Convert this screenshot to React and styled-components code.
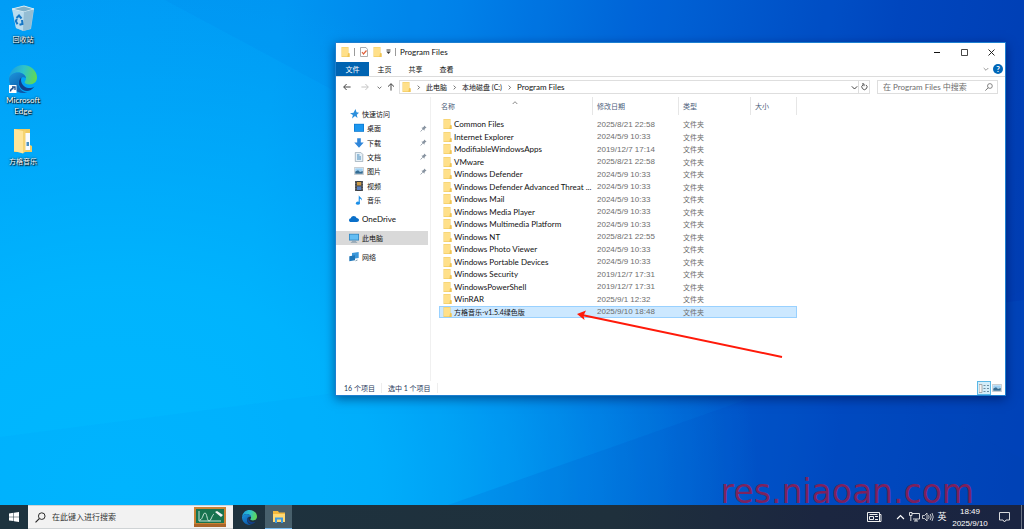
import React from "react";
import styled, { createGlobalStyle, css } from "styled-components";

const Global = createGlobalStyle`
  * { box-sizing: border-box; }
  body { margin: 0; font: 8px/12px Lato, "Noto Sans CJK SC", sans-serif; color: #111; }
  button, input { font: inherit; color: inherit; border: 0; padding: 0; margin: 0; background: none; }
  a { color: inherit; text-decoration: none; }
  ul, ol { list-style: none; margin: 0; padding: 0; }
  svg { display: block; flex: none; }
`;

const numerals = css`
  padding-top: 1px;
  font-family: "Liberation Sans", "Noto Sans CJK SC", sans-serif;
`;

const Desktop = styled.div`
  position: relative;
  display: flex;
  flex-direction: column;
  min-height: 100vh;
  overflow: hidden;
  background:
    radial-gradient(ellipse 62% 95% at 12% 92%, rgba(0, 184, 255, 1) 0%, rgba(0, 184, 255, 0.85) 40%, rgba(0, 176, 255, 0) 100%),
    linear-gradient(98deg, #009cf6 0%, #009af4 26%, #0084ea 42%, #0066d8 58%, #0046bd 82%, #003cb0 100%);
`;

const Beams = styled.svg`
  position: absolute;
  inset: 0;
  width: 100%;
  height: 100%;
`;

const Shortcuts = styled.nav`
  position: relative;
  flex: 1;
  display: flex;
  flex-direction: column;
  align-items: flex-start;
  padding-top: 4px;
`;

const Shortcut = styled.a`
  display: flex;
  flex-direction: column;
  align-items: center;
  gap: 2px;
  width: 46px;
  height: 61px;
  color: #fff;
  line-height: 11px;
  font-size: ${(p) => (p.$latin ? 8 : 7)}px;
  text-align: center;
  text-shadow: 0 0 2px #000, 1px 1px 1px #000;
`;

const Window = styled.main`
  position: absolute;
  top: 42px;
  left: 335px;
  right: 18px;
  display: flex;
  flex-direction: column;
  background: #fff;
  border: 1px solid #1d7fd0;
  box-shadow: 0 3px 10px rgba(0, 10, 60, 0.5);
`;

const TitleBar = styled.header`
  display: flex;
  align-items: center;
  gap: 4px;
  height: 18px;
  padding-left: 5px;
`;

const Divider = styled.span`
  width: 1px;
  height: 8px;
  background: #9a9a9a;
`;

const Title = styled.h1`
  flex: 1;
  margin: 0;
  font-size: 8px;
  font-weight: 400;
`;

const WindowControls = styled.div`
  display: flex;
`;

const WindowButton = styled.button`
  display: flex;
  align-items: center;
  justify-content: center;
  width: 27px;
  height: 18px;
`;

const Ribbon = styled.nav`
  display: flex;
  align-items: center;
  height: 16px;
  padding-right: 2px;
  border-bottom: 1px solid #dcdcdc;
`;

const Tab = styled.button`
  width: ${(p) => (p.$active ? 33 : 31)}px;
  height: 14px;
  font-size: 7px;
  ${(p) => p.$active && css`background: #0063b1; color: #fff;`}
`;

const Spacer = styled.span`
  flex: 1;
`;

const HelpButton = styled.button`
  width: 10px;
  height: 10px;
  margin-left: 4px;
  border-radius: 50%;
  background: #0067b8;
  color: #fff;
  font-weight: 700;
  line-height: 10px;
`;

const AddressRow = styled.div`
  display: flex;
  align-items: center;
  gap: 4px;
  height: 20px;
  padding: 0 7px 0 4px;
`;

const NavButton = styled.button`
  display: flex;
  align-items: center;
  justify-content: center;
  width: ${(p) => p.$width || 8}px;
  height: 12px;
`;

const AddressBox = styled.div`
  flex: 1;
  display: flex;
  align-items: center;
  height: 14px;
  padding-left: 2px;
  border: 1px solid #dedede;
`;

const Crumbs = styled.ol`
  flex: 1;
  display: flex;
  align-items: center;
`;

const Crumb = styled.li`
  display: flex;
  align-items: center;
  gap: 5px;
  padding-left: 5px;
  font-size: ${(p) => (p.$cjk ? 7 : 8)}px;
`;

const RefreshButton = styled.button`
  display: flex;
  align-items: center;
  justify-content: center;
  width: 11px;
  height: 12px;
  border-left: 1px solid #dedede;
`;

const SearchBox = styled.label`
  display: flex;
  align-items: center;
  width: 121px;
  height: 14px;
  margin-left: 3px;
  padding: 0 4px 0 5px;
  border: 1px solid #dedede;
`;

const SearchInput = styled.input`
  flex: 1;
  min-width: 0;
  font-size: 8px;
  outline: 0;
  &::placeholder { color: ${(p) => p.$tone || "#6d6d6d"}; opacity: 1; }
`;

const Content = styled.div`
  display: flex;
  min-height: 284px;
`;

const Sidebar = styled.nav`
  display: flex;
  flex-direction: column;
  gap: 5px;
  width: 95px;
  padding: 10px 2px 0 0;
  border-right: 1px solid #f0f0f0;
`;

const QuickGroup = styled.ul`
  display: flex;
  flex-direction: column;
  height: 100px;
`;

const QuickEntry = styled.li`
  flex: 1;
  display: flex;
`;

const Place = styled.a`
  flex: 1;
  display: flex;
  align-items: center;
  gap: 3px;
  min-height: 14px;
  padding: 0 1px 0 ${(p) => (p.$nested ? 18 : 13)}px;
  font-size: ${(p) => (p.$latin ? 8 : 7)}px;
  line-height: 14px;
  background: ${(p) => (p.$selected ? "#d9d9d9" : "transparent")};
`;

const TopPlace = styled.div`
  display: flex;
`;

const PlaceName = styled.span`
  flex: 1;
`;

const FileArea = styled.section`
  flex: 1;
  padding-left: 8px;
`;

const FileTable = styled.table`
  width: 358px;
  height: 221px;
  table-layout: fixed;
  border-collapse: separate;
  border-spacing: 0;
`;

const HeadCell = styled.th`
  height: 18px;
  padding: 0 0 0 ${(p) => (p.$first ? 2 : 4)}px;
  border-right: 1px solid #e6e6e6;
  color: #4c607a;
  font-size: 7px;
  font-weight: 400;
  text-align: left;
`;

const SortMark = styled.span`
  float: right;
  width: 80px;
  height: 12px;
`;

const GapRow = styled.tr`
  height: 3px;
`;

const Cell = styled.td`
  padding: 0 0 0 4px;
  color: #6d6d6d;
  font-size: ${(p) => (p.$cjk ? 7 : 8)}px;
  line-height: 10px;
  white-space: nowrap;
  ${(p) => p.$numeric && numerals}
`;

const FileRow = styled.tr`
  ${(p) => p.$selected && css`
    background: #cce8ff;
    outline: 1px solid #99d1ff;
    outline-offset: -1px;
  `}
`;

const FileName = styled.div`
  display: flex;
  align-items: center;
  gap: 2px;
  color: #111;
`;

const StatusBar = styled.footer`
  display: flex;
  align-items: center;
  gap: 6px;
  height: 14px;
  padding: 0 2px 0 8px;
  color: #1e395b;
  font-size: 7px;
`;

const StatusText = styled.span`
  padding-right: 6px;
  border-right: 1px solid #eeeeee;
  line-height: 10px;
`;

const ViewButton = styled.button`
  display: flex;
  align-items: center;
  justify-content: center;
  width: ${(p) => (p.$active ? 14 : 12)}px;
  height: 14px;
  ${(p) => p.$active && css`background: #d3edf9; border: 1px solid #5bb8e6;`}
`;

const ViewButtons = styled.div`
  display: flex;
`;

const Pointer = styled.svg`
  position: absolute;
  top: 267px;
  left: 240px;
`;

const Watermark = styled.p`
  position: absolute;
  right: 50px;
  bottom: 19px;
  margin: 0;
  color: rgba(160, 22, 66, 0.78);
  font: 33px/36px "DejaVu Sans", sans-serif;
`;

const Taskbar = styled.footer`
  position: relative;
  display: flex;
  align-items: stretch;
  height: 24px;
  background: linear-gradient(90deg, #1d333f, #1f303c 60%, #1b2640 80%, #1a2441);
  color: #fff;
`;

const TaskButton = styled.button`
  display: flex;
  align-items: center;
  justify-content: center;
  width: ${(p) => p.$width}px;
  ${(p) => p.$active && css`background: #48606c; border-bottom: 1px solid #76b9ed;`}
`;

const TaskSearch = styled.label`
  display: flex;
  align-items: center;
  gap: 6px;
  width: 205px;
  padding: 0 7px;
  background: #f2f2f2;
  border: 1px solid #cfd3d5;
  border-width: 1px 0;
  color: #333;
`;

const Tray = styled.div`
  display: flex;
  align-items: center;
`;

const TrayButton = styled.button`
  display: flex;
  align-items: center;
  justify-content: center;
  width: ${(p) => p.$width || 14}px;
  height: 24px;
  font-size: 9px;
`;

const Clock = styled.time`
  width: 42px;
  line-height: 12px;
  text-align: center;
  ${numerals}
`;

const PeekEdge = styled.span`
  width: 3px;
  height: 24px;
  border-left: 1px solid #6b7484;
`;

const Folder = () => (
  <svg width="9" height="10" viewBox="0 0 9 10" aria-hidden="true">
    <path d="M.5 0H7.500v6l1 .5v3.500H.5z" fill="#f2cc62" />
    <path d="M1 .5h6v8.800H1z" fill="#ffe08a" />
    <path d="M7 6.300h1.500V10H6.300z" fill="#f0c454" />
  </svg>
);

const Chevron = ({ dir = "right", size = 5, color = "#555" }) => {
  const turn = { right: 0, down: 90, up: -90 }[dir];
  return (
    <svg width={size} height={size} viewBox="0 0 6 6" aria-hidden="true">
      <path d="M2 .7 4.300 3 2 5.300" transform={`rotate(${turn} 3 3)`} fill="none" stroke={color} strokeWidth={size > 6 ? 0.8 : 1} />
    </svg>
  );
};

const Arrow = ({ angle = 0, color = "#444" }) => (
  <svg width="8" height="8" viewBox="0 0 8 8" aria-hidden="true">
    <path d="M7.600 4H.8M3.600 1 .7 4l2.900 3" transform={`rotate(${angle} 4 4)`} fill="none" stroke={color} strokeWidth="1" />
  </svg>
);

const Lens = ({ size = 8, color = "#555" }) => (
  <svg width={size} height={size} viewBox="0 0 8 8" aria-hidden="true">
    <circle cx="4.900" cy="3" r="2.400" fill="none" stroke={color} strokeWidth=".7" />
    <path d="M3.100 4.800.4 7.600" stroke={color} strokeWidth=".8" />
  </svg>
);

const EdgeLogo = ({ size, id }) => (
  <svg width={size} height={size} viewBox="0 0 28 28" aria-hidden="true">
    <defs>
      <linearGradient id={`${id}a`} x1="0" y1=".3" x2="1" y2=".5">
        <stop offset="0" stopColor="#1c9ee0" />
        <stop offset=".5" stopColor="#2fc3c9" />
        <stop offset="1" stopColor="#62d952" />
      </linearGradient>
      <linearGradient id={`${id}b`} x1="0" y1="0" x2=".6" y2="1">
        <stop offset="0" stopColor="#1d96dc" />
        <stop offset="1" stopColor="#0b57a8" />
      </linearGradient>
    </defs>
    <path d="M0 13C1 5 7 0 14 0c8 0 14 6 14 12.500 0 4-3 7-7.500 7-3 0-5-1-5-2.200 0-.8 1.500-1.600 1.500-4C17 10 13 7.500 9 7.500 5 7.500 1.500 10 0 13z" fill={`url(#${id}a)`} />
    <path d="M0 13c2-4 5-5.500 9-5.500 4.500 0 7.500 2.500 8 5.500-4-2-7.500 1-7.500 5.500 0 5 4 9 9 9C9 30-.5 23 0 13z" fill={`url(#${id}b)`} />
    <path d="M12.500 12.500c-3 2-3.500 6-1.500 9.500 3 5 10 6 14.500-.5-3 2-7 2-10 0-3-2.200-4.200-5.800-3-9z" fill="#11408c" />
  </svg>
);

const RecycleBin = () => (
  <svg width="24" height="28" viewBox="0 0 24 28" aria-hidden="true">
    <path d="M1 5 13 2l10 3-3 20-8 2-7-3z" fill="#a9cfe3" />
    <path d="M1 5l12-3 10 3-10 3z" fill="#7fb0c8" stroke="#dceef5" strokeWidth="1" />
    <path d="m1.500 6 11.500 2-1 18.500L5 24z" fill="#b9dcee" />
    <path d="m13 8 9.500-2.500L19.500 25l-7.500 2z" fill="#94bdd3" />
    <path d="M5.500 14 8 11.500l2.500 3M11 16l.5 4-3 .8M6.500 20.300 4.800 17l1.200-2" fill="none" stroke="#1476c6" strokeWidth="2" />
  </svg>
);

const EdgeShortcutArt = () => (
  <svg width="30" height="28" viewBox="0 0 30 28" aria-hidden="true">
    <g transform="translate(1 0)"><EdgeLogo size={28} id="desk" /></g>
    <path d="M1 20h7.500v8H1z" fill="#fff" />
    <path d="M2.500 26.500c0-2 1-3 3-3M4 22h3v3" fill="none" stroke="#174a8c" strokeWidth="1.300" />
  </svg>
);

const MusicFolderArt = () => (
  <svg width="20" height="28" viewBox="0 0 20 28" aria-hidden="true">
    <path d="M1 3h16v16l2 1v6H1z" fill="#f0cb62" />
    <path d="M12 7h5v17h-5z" fill="#f8fbff" />
    <path d="M13.500 16h2.500v4h-2.500z" fill="#4b8fc0" />
    <path d="M1 3l9 2v22.500L1 25z" fill="#ffe599" />
    <path d="M10 5l2.500-1v21.500L10 27.500z" fill="#f5d472" />
  </svg>
);

const Pin = () => (
  <svg width="7" height="7" viewBox="0 0 7 7" aria-hidden="true">
    <path d="M4.200.5 6.600 2.800 5.600 3 4.600 4.200l-.2 1.500L1.400 2.700l1.500-.2L4 1.400z" fill="#8793a0" />
    <path d="M2.800 4.200.6 6.500" stroke="#8793a0" strokeWidth=".8" />
  </svg>
);

const PLACE_ART = {
  star: <path d="M6.500 0l1 3.300 2.500.4-2.200 2 .7 3.300L6 7 3 9.500l.9-3.500L1 4.200l3.500-.5z" fill="#2b8fdc" />,
  desktop: <><path d="M0 .8h10v8H0z" fill="#0a78d0" /><path d="M.7 1.500h8.600v6.500H.7z" fill="#1c97ef" /></>,
  download: <path d="M3.200.3h3.600v4.200h2.900L5 9.800.3 4.500h2.900z" fill="#2f86da" />,
  document: <><path d="M1.300.4h5.500l2 2v7.200H1.300z" fill="#e6f0f7" stroke="#8fa0ad" strokeWidth=".7" /><path d="M3 3h2.500M3 5h4M3 7h4" stroke="#4289bb" strokeWidth="1" /></>,
  picture: <><path d="M.4 1.500h9.200v7H.4z" fill="#fff" stroke="#a4adb5" strokeWidth=".6" /><path d="M1.200 2.300h7.600v3H1.200z" fill="#9ed0f3" /><path d="M1.200 7.700V5.500L4 4.200l2 1.500 2.800-.8v2.800z" fill="#356c93" /></>,
  video: <><path d="M1 0h8v10H1z" fill="#3a3d42" /><path d="M3 1h4.200v3.500H3z" fill="#cc9b47" /><path d="M3 5.400h4.200V9H3z" fill="#5a83c4" /><path d="M1.900.6v9M8.200.6v9" stroke="#ddd" strokeWidth=".6" strokeDasharray=".8 .8" /></>,
  music: <><path d="M4.800 0c.3 2 3.700 2.700 3.200 5.700-.5-1.300-1.500-1.900-2.200-1.900v4.400H4.600z" fill="#1c8fe8" /><ellipse cx="3.900" cy="8.200" rx="2" ry="1.600" fill="#1c8fe8" /></>,
  cloud: <path d="M2.200 8C.7 8 0 7.200 0 6.200c0-1.100.8-1.800 1.800-1.900C2.200 2.800 3.400 2 4.700 2c1.300 0 2.300.7 2.800 1.900C9 4 10 4.800 10 6.100 10 7.300 9.100 8 8 8z" fill="#0a6fc9" />,
  computer: <><path d="M0 .8h10v6.700H0z" fill="#2d7fb8" /><path d="M.7 1.500h8.600v5.200H.7z" fill="#63bdf3" /><path d="M3 8.300h4M1.800 9.300h6.400" stroke="#8097a8" strokeWidth=".8" /></>,
  network: <><path d="M3 1 9.700 0v6L3 7z" fill="#3b97d9" /><path d="M.3 4.200 6 3.300v5L.3 9.200z" fill="#1f76b8" /><path d="M6.500 8.800 8.500 8" stroke="#7393a8" strokeWidth=".9" /></>,
};

const PlaceIcon = ({ kind }) => (
  <svg width="10" height="10" viewBox="0 0 10 10" aria-hidden="true">{PLACE_ART[kind]}</svg>
);

const QUICK = [
  ["desktop", "桌面", true],
  ["download", "下载", true],
  ["document", "文档", true],
  ["picture", "图片", true],
  ["video", "视频", false],
  ["music", "音乐", false],
];

const FILES = [
  ["Common Files", "2025/8/21 22:58"],
  ["Internet Explorer", "2024/5/9 10:33"],
  ["ModifiableWindowsApps", "2019/12/7 17:14"],
  ["VMware", "2025/8/21 22:58"],
  ["Windows Defender", "2024/5/9 10:33"],
  ["Windows Defender Advanced Threat ...", "2024/5/9 10:33"],
  ["Windows Mail", "2024/5/9 10:33"],
  ["Windows Media Player", "2024/5/9 10:33"],
  ["Windows Multimedia Platform", "2024/5/9 10:33"],
  ["Windows NT", "2025/8/21 22:55"],
  ["Windows Photo Viewer", "2024/5/9 10:33"],
  ["Windows Portable Devices", "2024/5/9 10:33"],
  ["Windows Security", "2019/12/7 17:31"],
  ["WindowsPowerShell", "2019/12/7 17:31"],
  ["WinRAR", "2025/9/1 12:32"],
  ["方格音乐-v1.5.4绿色版", "2025/9/10 18:48", true],
];

export default function App() {
  return (
    <Desktop>
      <Global />
      <Beams viewBox="0 0 1024 529" preserveAspectRatio="none" aria-hidden="true">
        <path d="M165 0 1024 460V0z" fill="#0050d0" opacity=".05" />
        <path d="M0 437 313 396 1024 300V529H0z" fill="#0090f0" opacity=".08" />
        <path d="M380 529 757 396 1024 290V529z" fill="#0044c0" opacity=".12" />
      </Beams>

      <Shortcuts aria-label="桌面">
        <Shortcut href="#bin"><RecycleBin />回收站</Shortcut>
        <Shortcut href="#edge" $latin><EdgeShortcutArt /><span>Microsoft<br />Edge</span></Shortcut>
        <Shortcut href="#music"><MusicFolderArt />方格音乐</Shortcut>
      </Shortcuts>

      <Window>
        <TitleBar>
          <Folder />
          <Divider />
          <svg width="10" height="10" viewBox="0 0 10 10" aria-hidden="true">
            <path d="M1.500.5h5.500l1.500 2v7h-7z" fill="#fff" stroke="#999" strokeWidth=".8" />
            <path d="m3 5 1.500 2 3-3.500" fill="none" stroke="#e0603c" strokeWidth="1.200" />
          </svg>
          <Folder />
          <svg width="5" height="6" viewBox="0 0 5 6" aria-hidden="true"><path d="M.5 1h4" stroke="#333" /><path d="M.3 2.500h4.400L2.500 5z" fill="#333" /></svg>
          <Divider />
          <Title>Program Files</Title>
          <WindowControls>
            <WindowButton aria-label="最小化"><svg width="7" height="7"><path d="M0 3.500h6" stroke="#111" /></svg></WindowButton>
            <WindowButton aria-label="最大化"><svg width="7" height="7"><path d="M.5.5h6v6h-6z" fill="none" stroke="#333" strokeWidth=".9" /></svg></WindowButton>
            <WindowButton aria-label="关闭"><svg width="7" height="7"><path d="m.5.5 6 6m0-6-6 6" stroke="#111" strokeWidth=".9" /></svg></WindowButton>
          </WindowControls>
        </TitleBar>

        <Ribbon>
          <Tab $active>文件</Tab>
          <Tab>主页</Tab>
          <Tab>共享</Tab>
          <Tab>查看</Tab>
          <Spacer />
          <Chevron dir="down" size={6} color="#999" />
          <HelpButton aria-label="帮助">?</HelpButton>
        </Ribbon>

        <AddressRow>
          <NavButton $width={14} aria-label="后退"><Arrow /></NavButton>
          <NavButton $width={13} aria-label="前进"><Arrow angle={180} color="#c4c4c4" /></NavButton>
          <NavButton aria-label="最近"><Chevron dir="down" /></NavButton>
          <NavButton aria-label="向上"><Arrow angle={90} /></NavButton>
          <AddressBox>
            <Folder />
            <Crumbs>
              <Crumb $cjk><Chevron />此电脑</Crumb>
              <Crumb $cjk><Chevron />本地磁盘 (C:)</Crumb>
              <Crumb><Chevron />Program Files</Crumb>
            </Crumbs>
            <Chevron dir="down" size={7} color="#333" />
            <RefreshButton aria-label="刷新">
              <svg width="7" height="8" viewBox="0 0 7 8"><path d="M2 1.800A2.600 2.600 0 1 0 5 1.900M1 .9h2v2.300" fill="none" stroke="#444" strokeWidth=".9" /></svg>
            </RefreshButton>
          </AddressBox>
          <SearchBox>
            <SearchInput placeholder="在 Program Files 中搜索" aria-label="搜索" />
            <Lens />
          </SearchBox>
        </AddressRow>

        <Content>
          <Sidebar>
            <QuickGroup>
              <QuickEntry><Place href="#quick"><PlaceIcon kind="star" /><PlaceName>快速访问</PlaceName></Place></QuickEntry>
              {QUICK.map(([kind, name, pinned]) => (
                <QuickEntry key={kind}>
                  <Place href={`#${kind}`} $nested><PlaceIcon kind={kind} /><PlaceName>{name}</PlaceName>{pinned && <Pin />}</Place>
                </QuickEntry>
              ))}
            </QuickGroup>
            <TopPlace><Place href="#cloud" $latin><PlaceIcon kind="cloud" /><PlaceName>OneDrive</PlaceName></Place></TopPlace>
            <TopPlace><Place href="#computer" $selected><PlaceIcon kind="computer" /><PlaceName>此电脑</PlaceName></Place></TopPlace>
            <TopPlace><Place href="#network"><PlaceIcon kind="network" /><PlaceName>网络</PlaceName></Place></TopPlace>
          </Sidebar>

          <FileArea>
            <FileTable>
              <colgroup><col width="154" /><col width="86" /><col width="72" /><col width="46" /></colgroup>
              <thead>
                <tr>
                  <HeadCell $first>名称<SortMark><Chevron dir="up" size={6} color="#888" /></SortMark></HeadCell>
                  <HeadCell>修改日期</HeadCell>
                  <HeadCell>类型</HeadCell>
                  <HeadCell>大小</HeadCell>
                </tr>
                <GapRow />
              </thead>
              <tbody>
                {FILES.map(([name, date, selected]) => (
                  <FileRow key={name} $selected={selected}>
                    <Cell $cjk={selected}><FileName><Folder />{name}</FileName></Cell>
                    <Cell $numeric>{date}</Cell>
                    <Cell $cjk>文件夹</Cell>
                    <Cell />
                  </FileRow>
                ))}
              </tbody>
            </FileTable>
          </FileArea>
        </Content>

        <StatusBar>
          <StatusText>16 个项目</StatusText>
          <StatusText>选中 1 个项目</StatusText>
          <Spacer />
          <ViewButtons>
            <ViewButton $active aria-label="详细信息">
              <svg width="10" height="9"><path d="M0 .5h3v8H0z" fill="#f4f4f4" stroke="#9a9a9a" strokeWidth=".8" /><path d="M4.500 1.500h2M4.500 4.500h2M4.500 7.500h2M8 1.500h2M8 4.500h2M8 7.500h2" stroke="#6d8fa3" /></svg>
            </ViewButton>
            <ViewButton aria-label="大图标"><PlaceIcon kind="picture" /></ViewButton>
          </ViewButtons>
        </StatusBar>

        <Pointer width="210" height="52" viewBox="0 0 210 52" aria-hidden="true">
          <path d="M6 5 206 47" stroke="#ff1a0a" strokeWidth="2" />
          <path d="M1 4 10 .500 7.500 5.500 8.500 10z" fill="#ff1a0a" />
        </Pointer>
      </Window>

      <Watermark>res.niaoan.com</Watermark>

      <Taskbar>
        <TaskButton $width={28} aria-label="开始">
          <svg width="10" height="10" viewBox="0 0 10 10"><path d="M0 1.400 4.500.8v3.900H0zM5 .7 10 0v4.700H5zM0 5.200h4.500v3.900L0 8.500zM5 5.200h5V10l-5-.7z" fill="#fff" /></svg>
        </TaskButton>
        <TaskSearch>
          <Lens size={11} color="#222" />
          <SearchInput $tone="#333" placeholder="在此键入进行搜索" aria-label="在此键入进行搜索" />
          <svg width="32" height="20" viewBox="0 0 32 20" aria-hidden="true">
            <path d="M0 0h32v18H0z" fill="#c98234" /><path d="M0 17h32v3H0z" fill="#a9642a" />
            <path d="M2 2h28v14H2z" fill="#17734f" />
            <path d="M5 4v10h22M6 13c3-1 3-7 5-7s2 8 4 8 3-6 5-7" fill="none" stroke="#d9efe4" strokeWidth=".9" />
            <path d="m21 5 6 5 2-2-6-4z" fill="#f3f3f3" />
          </svg>
        </TaskSearch>
        <TaskButton $width={32} aria-label="Microsoft Edge"><EdgeLogo size={15} id="task" /></TaskButton>
        <TaskButton $width={27} $active aria-label="文件资源管理器">
          <svg width="14" height="12" viewBox="0 0 14 12"><path d="M1 0h5l1 1.500h6V11H1z" fill="#f4b93c" /><path d="M1 3h12v8H1z" fill="#ffd973" /><path d="M3 12V6.500h8V12H9V8.500H5V12z" fill="#3f9be0" /></svg>
        </TaskButton>
        <Spacer />
        <Tray>
          <TrayButton $width={38} aria-label="资讯">
            <svg width="15" height="11" viewBox="0 0 15 11"><path d="M.5.5h12v9h-12zM12.500 2.500H14v7h-2M2.500 2.500h8M2.500 4.500h4v3h-4zM8 4.500h3M8 7.500h3" fill="none" stroke="#eee" strokeWidth="1" /></svg>
          </TrayButton>
          <TrayButton aria-label="显示隐藏的图标"><Chevron dir="up" size={9} color="#fff" /></TrayButton>
          <TrayButton aria-label="网络"><svg width="11" height="10" viewBox="0 0 11 10"><path d="M3 1.500h7.500v5.500H4M5 9h4M7 7v2M.5.5h2.500v3H.5zM1.800 3.500V9" fill="none" stroke="#eee" strokeWidth=".9" /></svg></TrayButton>
          <TrayButton aria-label="音量"><svg width="12" height="10" viewBox="0 0 12 10"><path d="M.5 3.500h2L5 1v8L2.500 6.500h-2zM6.500 3.200q1.200 1.800 0 3.600M8.200 2q2 3 0 6M10 1q2.500 4 0 8" fill="none" stroke="#eee" strokeWidth=".8" /></svg></TrayButton>
          <TrayButton aria-label="输入法">英</TrayButton>
          <Clock>18:49<br />2025/9/10</Clock>
          <TrayButton $width={26} aria-label="通知"><svg width="11" height="11" viewBox="0 0 11 11"><path d="M.5.5h10v7.500H7L5.500 10 4 8H.5z" fill="none" stroke="#eee" strokeWidth=".9" /></svg></TrayButton>
          <TrayButton $width={4} aria-label="显示桌面" />
          <PeekEdge />
        </Tray>
      </Taskbar>
    </Desktop>
  );
}
